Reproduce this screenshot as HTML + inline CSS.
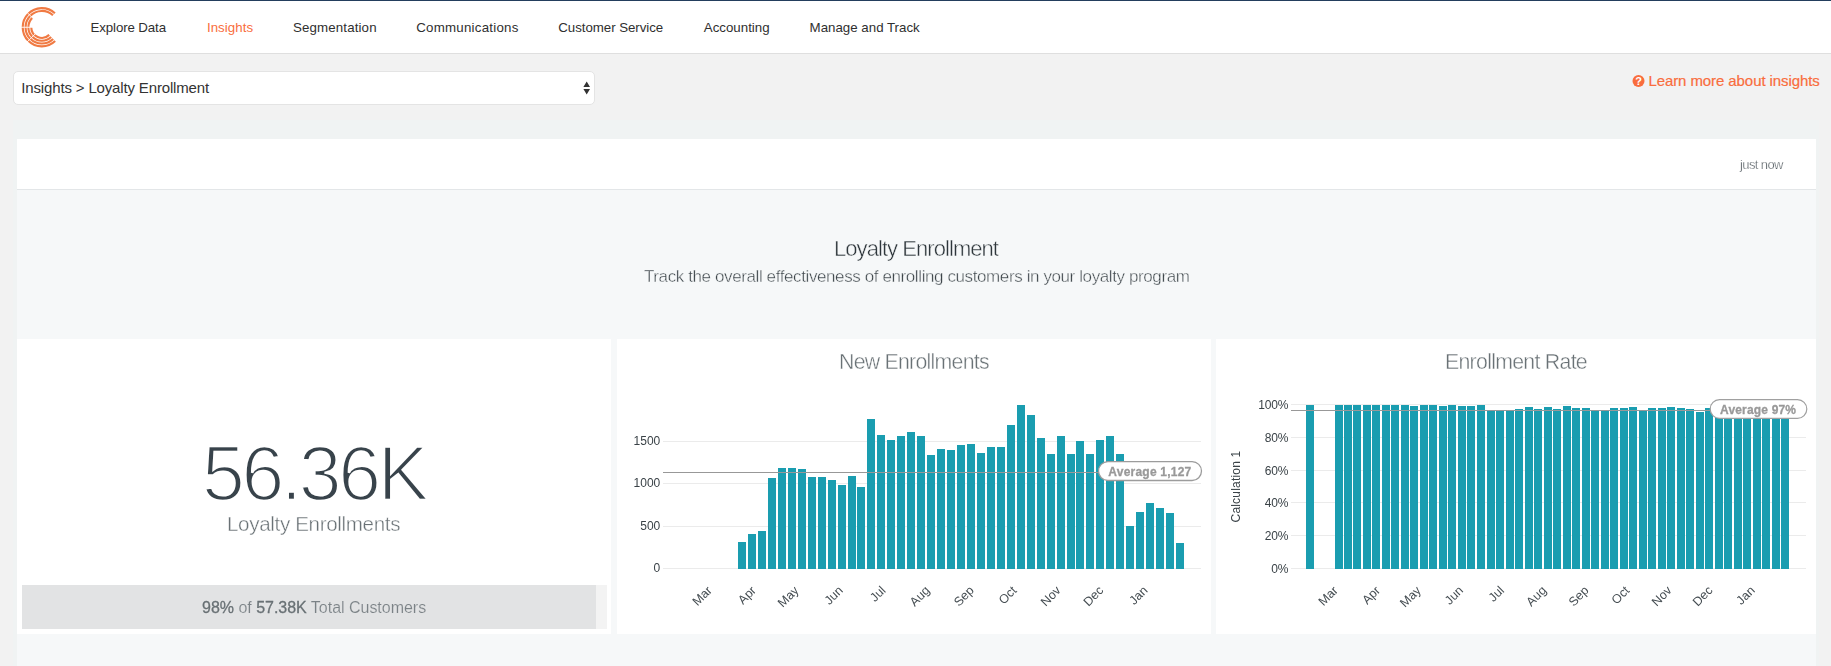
<!DOCTYPE html>
<html lang="en">
<head>
<meta charset="utf-8">
<title>Insights - Loyalty Enrollment</title>
<style>
html,body{margin:0;padding:0}
body{width:1831px;height:666px;overflow:hidden;background:#f2f2f2;font-family:'Liberation Sans', sans-serif;position:relative}
.abs{position:absolute}
.g{will-change:transform}
.tx{position:absolute;white-space:pre;margin:0;padding:0;font-weight:normal;text-decoration:none;display:block}
.tx b{font-weight:normal;color:#687074;-webkit-text-stroke:0.28px #687074}
#nav{position:absolute;left:0;top:0;width:1831px;height:52px;background:#fff;border-top:1px solid #233e5d;border-bottom:1px solid #dfdfdf}
#select{position:absolute;left:13px;top:71px;width:580px;height:32px;background:#fff;border:1px solid #e4e4e4;border-radius:5px}
#wrap{position:absolute;left:13px;top:120px;width:1806px;height:546px;background:#f0f3f3}
#bar{position:absolute;left:17px;top:139px;width:1799px;height:50px;background:#fff;border-bottom:1px solid #e3e6e8}
#dash{position:absolute;left:17px;top:190px;width:1799px;height:476px;background:#f6f8f9}
.card{position:absolute;top:339px;height:295px;background:#fff}
#track{position:absolute;left:22px;top:585px;width:585px;height:44px;background:#f3f3f3}
#fill{position:absolute;left:0;top:0;width:574px;height:44px;background:#e2e3e4}
svg text{font-family:'Liberation Sans', sans-serif}
</style>
</head>
<body>
<header>
<div id="nav"></div>
<svg class="abs" style="left:0;top:0" width="70" height="53" viewBox="0 0 70 53"><g fill="none" stroke="#f07a43" stroke-width="2.15"><path d="M54.91 13.24A19.15 19.15 0 1 0 55.15 41.03"/><path d="M52.97 15.33A16.30 16.30 0 1 0 53.17 38.98"/><path d="M32.34 17.74A13.45 13.45 0 0 0 51.19 36.93"/><path d="M31.25 27.25A10.60 10.60 0 0 0 49.21 34.88"/></g><g stroke="#fff" stroke-width="0.9"><line x1="33.85" y1="27.25" x2="20.35" y2="27.25"/><line x1="36.19" y1="21.59" x2="26.65" y2="12.05"/><line x1="36.19" y1="32.91" x2="26.65" y2="42.45"/></g></svg>
<nav>
<a class="tx" id="n1" style="left:90.5px;top:20px;font-size:13.3px;line-height:16px;letter-spacing:-0.118px;color:#2f2f2f">Explore Data</a>
<a class="tx" id="n2" style="left:206.9px;top:20px;font-size:13.3px;line-height:16px;letter-spacing:0.071px;color:#f96d3d">Insights</a>
<a class="tx" id="n3" style="left:293.0px;top:20px;font-size:13.3px;line-height:16px;letter-spacing:0.136px;color:#2f2f2f">Segmentation</a>
<a class="tx" id="n4" style="left:416.2px;top:20px;font-size:13.3px;line-height:16px;letter-spacing:0.246px;color:#2f2f2f">Communications</a>
<a class="tx" id="n5" style="left:558.3px;top:20px;font-size:13.3px;line-height:16px;letter-spacing:-0.047px;color:#2f2f2f">Customer Service</a>
<a class="tx" id="n6" style="left:703.8px;top:20px;font-size:13.3px;line-height:16px;letter-spacing:0.000px;color:#2f2f2f">Accounting</a>
<a class="tx" id="n7" style="left:809.6px;top:20px;font-size:13.3px;line-height:16px;letter-spacing:0.000px;color:#2f2f2f">Manage and Track</a>
</nav>
</header>
<main>
<div class="toolbar">
<div id="select"></div>
<span class="tx" id="sel" style="left:21.3px;top:79px;font-size:15px;line-height:18px;letter-spacing:-0.154px;color:#333">Insights &gt; Loyalty Enrollment</span>
<svg class="abs" style="left:582px;top:80px" width="10" height="16" viewBox="0 0 10 16"><path d="M1.4 6.9L4.7 1.5L8 6.9ZM1.4 9L8 9L4.7 14.4Z" fill="#333"/></svg>
<svg class="abs" style="left:1632px;top:74px" width="14" height="14" viewBox="0 0 14 14"><circle cx="6.5" cy="6.9" r="6" fill="#f96d3d"/><text x="6.6" y="10.9" text-anchor="middle" font-size="11" font-weight="bold" fill="#fff">?</text></svg>
<a class="tx" id="learn" style="left:1648.4px;top:72px;font-size:15px;line-height:18px;letter-spacing:-0.083px;color:#f96d3d;-webkit-text-stroke:0.2px #f96d3d">Learn more about insights</a>
</div>
<div id="wrap"></div>
<div id="bar"></div>
<span class="tx g" id="now" style="left:1740.0px;top:157px;font-size:13px;line-height:16px;letter-spacing:-0.614px;color:#596166;-webkit-text-stroke:0.25px #fff">just now</span>
<div id="dash"></div>
<h1 class="tx g" id="title" style="left:833.9px;top:235px;font-size:22px;line-height:27px;letter-spacing:-0.941px;color:#2e363b;-webkit-text-stroke:0.45px #f6f8f9">Loyalty Enrollment</h1>
<p class="tx g" id="sub" style="left:644.0px;top:266px;font-size:17px;line-height:21px;letter-spacing:-0.396px;color:#3c4449;-webkit-text-stroke:0.4px #f6f8f9">Track the overall effectiveness of enrolling customers in your loyalty program</p>
<section>
<div class="card" style="left:17px;width:594px"></div>
<span class="tx g" id="big" style="left:202.4px;top:427px;font-size:77px;line-height:93px;letter-spacing:-3.400px;color:#38434b;-webkit-text-stroke:2.4px #fff">56.36K</span>
<p class="tx g" id="le" style="left:226.8px;top:511px;font-size:20.6px;line-height:25px;letter-spacing:-0.344px;color:#697175;-webkit-text-stroke:0.4px #fff">Loyalty Enrollments</p>
<div id="track"><div id="fill"></div></div>
<p class="tx g" id="pct" style="left:202.0px;top:598px;font-size:16px;line-height:20px;letter-spacing:-0.021px;color:#7b8286;-webkit-text-stroke:0.15px #e2e3e4"><b>98%</b> of <b>57.38K</b> Total Customers</p>
</section>
<section>
<div class="card" style="left:617px;width:594px"></div>
<h2 class="tx g" id="t2" style="left:838.7px;top:349px;font-size:21.3px;line-height:26px;letter-spacing:-0.743px;color:#697175;-webkit-text-stroke:0.4px #fff">New Enrollments</h2>
<svg class="abs g" style="left:617px;top:339px" width="594" height="295" viewBox="617 339 594 295"><rect x="663" y="441" width="538" height="1" fill="#ebebeb"/><rect x="663" y="483" width="538" height="1" fill="#ebebeb"/><rect x="663" y="526" width="538" height="1" fill="#ebebeb"/><rect x="663" y="568" width="538" height="1" fill="#ebebeb"/><g fill="#1a9db0"><rect x="738" y="542" width="8" height="27"/><rect x="748" y="534" width="8" height="35"/><rect x="758" y="531" width="8" height="38"/><rect x="768" y="478" width="8" height="91"/><rect x="778" y="468" width="8" height="101"/><rect x="788" y="468" width="8" height="101"/><rect x="798" y="469" width="8" height="100"/><rect x="808" y="477" width="8" height="92"/><rect x="818" y="477" width="8" height="92"/><rect x="828" y="480" width="8" height="89"/><rect x="838" y="485" width="8" height="84"/><rect x="848" y="476" width="8" height="93"/><rect x="857" y="487" width="8" height="82"/><rect x="867" y="419" width="8" height="150"/><rect x="877" y="435" width="8" height="134"/><rect x="887" y="440" width="8" height="129"/><rect x="897" y="436" width="8" height="133"/><rect x="907" y="432" width="8" height="137"/><rect x="917" y="436" width="8" height="133"/><rect x="927" y="455" width="8" height="114"/><rect x="937" y="449" width="8" height="120"/><rect x="947" y="450" width="8" height="119"/><rect x="957" y="445" width="8" height="124"/><rect x="967" y="444" width="8" height="125"/><rect x="977" y="453" width="8" height="116"/><rect x="987" y="447" width="8" height="122"/><rect x="997" y="447" width="8" height="122"/><rect x="1007" y="425" width="8" height="144"/><rect x="1017" y="405" width="8" height="164"/><rect x="1027" y="415" width="8" height="154"/><rect x="1037" y="438" width="8" height="131"/><rect x="1047" y="454" width="8" height="115"/><rect x="1057" y="436" width="8" height="133"/><rect x="1067" y="454" width="8" height="115"/><rect x="1076" y="441" width="8" height="128"/><rect x="1086" y="454" width="8" height="115"/><rect x="1096" y="440" width="8" height="129"/><rect x="1106" y="436" width="8" height="133"/><rect x="1116" y="454" width="8" height="115"/><rect x="1126" y="526" width="8" height="43"/><rect x="1136" y="512" width="8" height="57"/><rect x="1146" y="503" width="8" height="66"/><rect x="1156" y="508" width="8" height="61"/><rect x="1166" y="513" width="8" height="56"/><rect x="1176" y="543" width="8" height="26"/></g><rect x="663" y="472" width="436" height="1" fill="#989898"/><rect x="1098.5" y="461.65" width="103" height="18.85" rx="9.4" fill="#fff" stroke="#9c9c9c" stroke-width="1.3"/><text x="1149.8" y="476" text-anchor="middle" font-size="12" font-weight="bold" fill="#999" stroke="#999" stroke-width="0.3" textLength="83" lengthAdjust="spacing">Average 1,127</text><text x="660.3" y="445.2" text-anchor="end" font-size="12" fill="#3a4247">1500</text><text x="660.3" y="487.2" text-anchor="end" font-size="12" fill="#3a4247">1000</text><text x="660.3" y="530.2" text-anchor="end" font-size="12" fill="#3a4247">500</text><text x="660.3" y="572.2" text-anchor="end" font-size="12" fill="#3a4247">0</text><text transform="translate(712.7 591.2) rotate(-45)" text-anchor="end" font-size="12.5" fill="#454d52">Mar</text><text transform="translate(756.8 591.2) rotate(-45)" text-anchor="end" font-size="12.5" fill="#454d52">Apr</text><text transform="translate(799.5 591.2) rotate(-45)" text-anchor="end" font-size="12.5" fill="#454d52">May</text><text transform="translate(843.7 591.2) rotate(-45)" text-anchor="end" font-size="12.5" fill="#454d52">Jun</text><text transform="translate(886.4 591.2) rotate(-45)" text-anchor="end" font-size="12.5" fill="#454d52">Jul</text><text transform="translate(930.5 591.2) rotate(-45)" text-anchor="end" font-size="12.5" fill="#454d52">Aug</text><text transform="translate(974.7 591.2) rotate(-45)" text-anchor="end" font-size="12.5" fill="#454d52">Sep</text><text transform="translate(1017.4 591.2) rotate(-45)" text-anchor="end" font-size="12.5" fill="#454d52">Oct</text><text transform="translate(1061.5 591.2) rotate(-45)" text-anchor="end" font-size="12.5" fill="#454d52">Nov</text><text transform="translate(1104.2 591.2) rotate(-45)" text-anchor="end" font-size="12.5" fill="#454d52">Dec</text><text transform="translate(1148.4 591.2) rotate(-45)" text-anchor="end" font-size="12.5" fill="#454d52">Jan</text></svg>
</section>
<section>
<div class="card" style="left:1216px;width:600px"></div>
<h2 class="tx g" id="t3" style="left:1445.1px;top:349px;font-size:21.3px;line-height:26px;letter-spacing:-0.714px;color:#697175;-webkit-text-stroke:0.4px #fff">Enrollment Rate</h2>
<svg class="abs g" style="left:1216px;top:339px" width="600" height="295" viewBox="1216 339 600 295"><rect x="1291" y="404" width="515" height="1" fill="#ebebeb"/><rect x="1291" y="437" width="515" height="1" fill="#ebebeb"/><rect x="1291" y="470" width="515" height="1" fill="#ebebeb"/><rect x="1291" y="502" width="515" height="1" fill="#ebebeb"/><rect x="1291" y="535" width="515" height="1" fill="#ebebeb"/><rect x="1291" y="568" width="515" height="1" fill="#ebebeb"/><g fill="#1a9db0"><rect x="1306" y="405" width="8" height="164"/><rect x="1335" y="405" width="8" height="164"/><rect x="1344" y="405" width="8" height="164"/><rect x="1353" y="405" width="8" height="164"/><rect x="1363" y="405" width="8" height="164"/><rect x="1372" y="405" width="8" height="164"/><rect x="1382" y="405" width="8" height="164"/><rect x="1391" y="405" width="8" height="164"/><rect x="1401" y="405" width="8" height="164"/><rect x="1410" y="406" width="8" height="163"/><rect x="1420" y="405" width="8" height="164"/><rect x="1429" y="405" width="8" height="164"/><rect x="1439" y="406" width="8" height="163"/><rect x="1448" y="405" width="8" height="164"/><rect x="1458" y="406" width="8" height="163"/><rect x="1467" y="406" width="8" height="163"/><rect x="1477" y="405" width="8" height="164"/><rect x="1487" y="410" width="8" height="159"/><rect x="1496" y="410" width="8" height="159"/><rect x="1506" y="410" width="8" height="159"/><rect x="1515" y="409" width="8" height="160"/><rect x="1525" y="407" width="8" height="162"/><rect x="1534" y="409" width="8" height="160"/><rect x="1544" y="407" width="8" height="162"/><rect x="1553" y="409" width="8" height="160"/><rect x="1563" y="406" width="8" height="163"/><rect x="1572" y="408" width="8" height="161"/><rect x="1582" y="408" width="8" height="161"/><rect x="1591" y="410" width="8" height="159"/><rect x="1601" y="410" width="8" height="159"/><rect x="1610" y="408" width="8" height="161"/><rect x="1620" y="408" width="8" height="161"/><rect x="1629" y="407" width="8" height="162"/><rect x="1639" y="410" width="8" height="159"/><rect x="1648" y="408" width="8" height="161"/><rect x="1658" y="408" width="8" height="161"/><rect x="1667" y="407" width="8" height="162"/><rect x="1677" y="408" width="8" height="161"/><rect x="1686" y="409" width="8" height="160"/><rect x="1696" y="412" width="8" height="157"/><rect x="1705" y="408" width="8" height="161"/><rect x="1715" y="408" width="8" height="161"/><rect x="1724" y="408" width="8" height="161"/><rect x="1734" y="408" width="8" height="161"/><rect x="1743" y="408" width="8" height="161"/><rect x="1753" y="408" width="8" height="161"/><rect x="1762" y="408" width="8" height="161"/><rect x="1772" y="408" width="8" height="161"/><rect x="1781" y="408" width="8" height="161"/></g><rect x="1291" y="410" width="420" height="1" fill="#989898"/><rect x="1710.2" y="399.7" width="96.6" height="18.6" rx="9.3" fill="#fff" stroke="#a0a0a0" stroke-width="1.2"/><text x="1758" y="414" text-anchor="middle" font-size="12" font-weight="bold" fill="#999" stroke="#999" stroke-width="0.3" textLength="76" lengthAdjust="spacing">Average 97%</text><text x="1288.3" y="408.5" text-anchor="end" font-size="12" fill="#3a4247" letter-spacing="-0.15">100%</text><text x="1288.3" y="441.5" text-anchor="end" font-size="12" fill="#3a4247" letter-spacing="-0.15">80%</text><text x="1288.3" y="474.5" text-anchor="end" font-size="12" fill="#3a4247" letter-spacing="-0.15">60%</text><text x="1288.3" y="506.5" text-anchor="end" font-size="12" fill="#3a4247" letter-spacing="-0.15">40%</text><text x="1288.3" y="539.5" text-anchor="end" font-size="12" fill="#3a4247" letter-spacing="-0.15">20%</text><text x="1288.3" y="572.5" text-anchor="end" font-size="12" fill="#3a4247" letter-spacing="-0.15">0%</text><text transform="translate(1338.7 591.2) rotate(-45)" text-anchor="end" font-size="12.5" fill="#454d52">Mar</text><text transform="translate(1380.9 591.2) rotate(-45)" text-anchor="end" font-size="12.5" fill="#454d52">Apr</text><text transform="translate(1421.8 591.2) rotate(-45)" text-anchor="end" font-size="12.5" fill="#454d52">May</text><text transform="translate(1464.0 591.2) rotate(-45)" text-anchor="end" font-size="12.5" fill="#454d52">Jun</text><text transform="translate(1504.9 591.2) rotate(-45)" text-anchor="end" font-size="12.5" fill="#454d52">Jul</text><text transform="translate(1547.1 591.2) rotate(-45)" text-anchor="end" font-size="12.5" fill="#454d52">Aug</text><text transform="translate(1589.4 591.2) rotate(-45)" text-anchor="end" font-size="12.5" fill="#454d52">Sep</text><text transform="translate(1630.3 591.2) rotate(-45)" text-anchor="end" font-size="12.5" fill="#454d52">Oct</text><text transform="translate(1672.5 591.2) rotate(-45)" text-anchor="end" font-size="12.5" fill="#454d52">Nov</text><text transform="translate(1713.4 591.2) rotate(-45)" text-anchor="end" font-size="12.5" fill="#454d52">Dec</text><text transform="translate(1755.6 591.2) rotate(-45)" text-anchor="end" font-size="12.5" fill="#454d52">Jan</text><text transform="translate(1239.5 486.5) rotate(-90)" text-anchor="middle" font-size="12" fill="#3a4247" letter-spacing="0.2">Calculation 1</text></svg>
</section>
</main>
</body>
</html>
